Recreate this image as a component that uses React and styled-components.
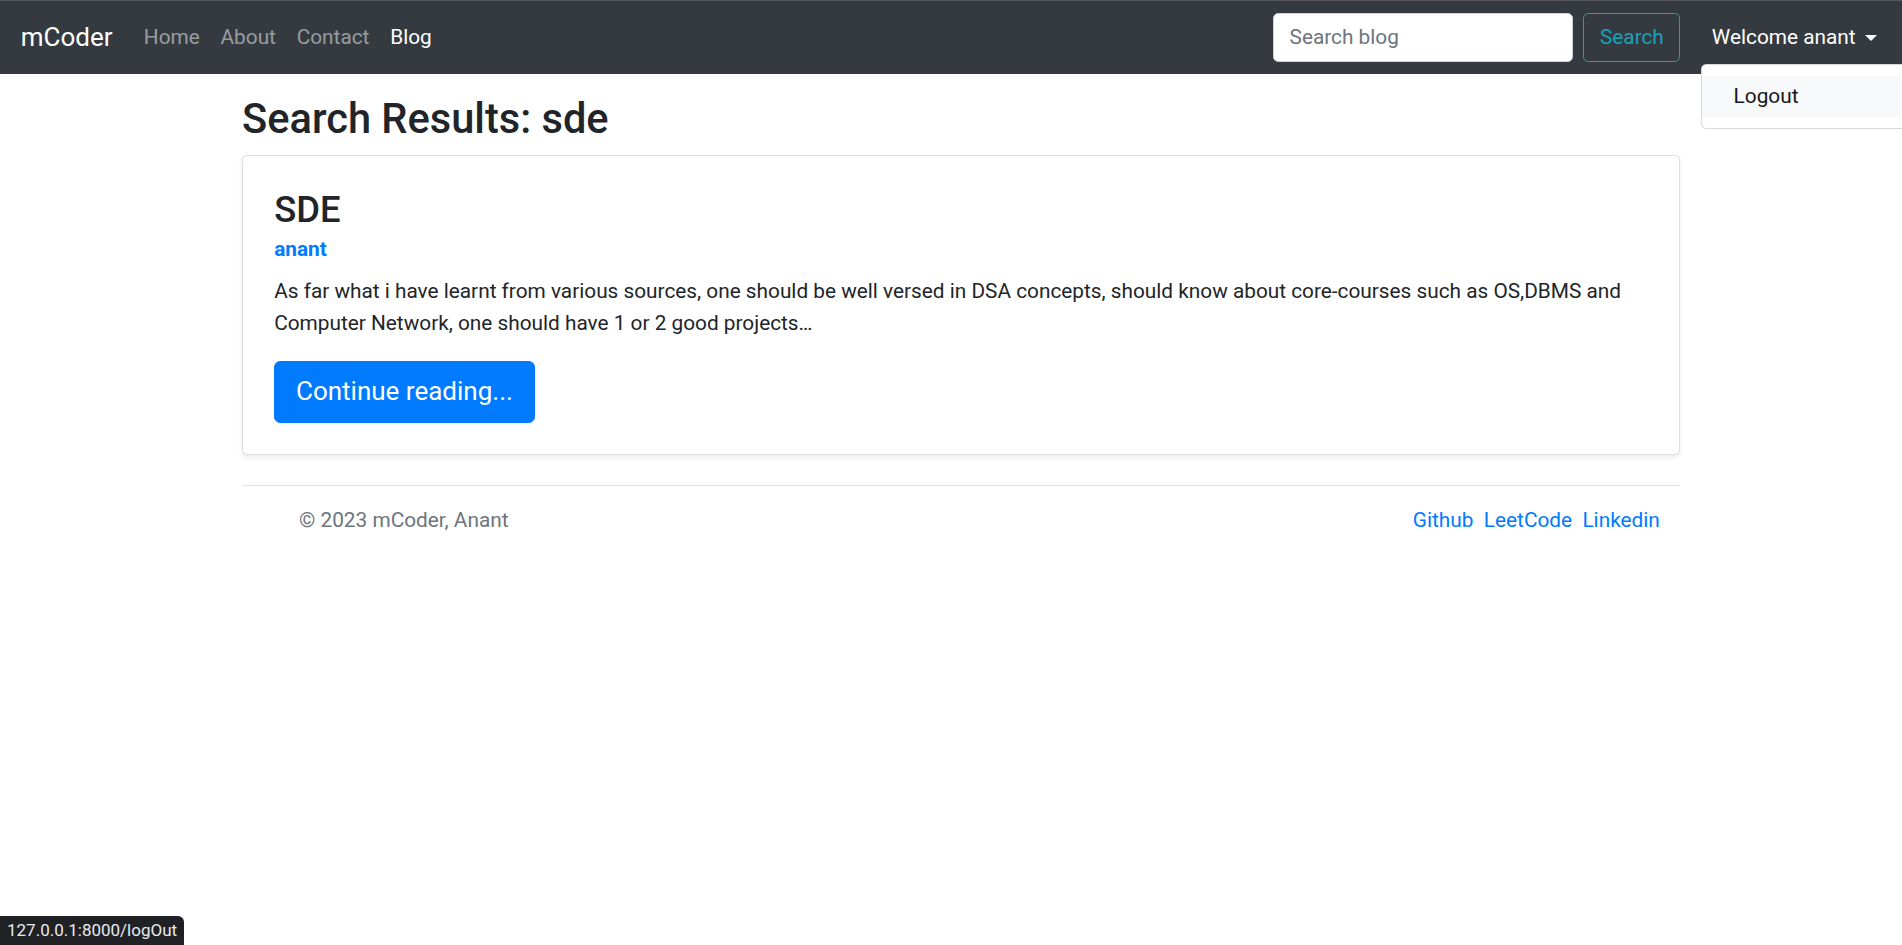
import styled, { createGlobalStyle } from 'styled-components';

const GlobalStyle = createGlobalStyle`
  html {
    font-size: 20.8px;
  }
  body {
    margin: 0;
    overflow-x: hidden;
    font-family: Roboto, "Liberation Sans", Arial, sans-serif;
    font-size: 1rem;
    line-height: 1.5;
    color: #212529;
    background: #fff;
  }
  * {
    box-sizing: border-box;
  }
`;

const Navbar = styled.nav`
  display: flex;
  align-items: center;
  height: 74px;
  padding: 0 15px 0 1rem;
  background: #343a40;
  border-top: 1px solid #55595e;
`;

const Brand = styled.a`
  font-size: 26px;
  line-height: 1.5;
  color: #fff;
  margin-right: 1rem;
  text-decoration: none;
`;

const NavList = styled.div`
  display: flex;
  align-items: center;
  flex: 1;
`;

const NavLink = styled.a`
  padding: 0.5rem;
  color: ${(p) => (p.$active ? '#fff' : 'rgba(255, 255, 255, 0.5)')};
  text-decoration: none;
`;

const SearchForm = styled.form`
  display: flex;
  align-items: center;
  gap: 0.5rem;
`;

const SearchInput = styled.input`
  width: 300px;
  height: 48.8px;
  padding: 0.375rem 0.75rem;
  font-family: inherit;
  font-size: 1rem;
  color: #495057;
  background: #fff;
  border: 1px solid #ced4da;
  border-radius: 5.2px;
  &::placeholder {
    color: #6c757d;
  }
`;

const OutlineButton = styled.button`
  height: 48.8px;
  padding: 0.375rem 0.75rem;
  font-family: inherit;
  font-size: 1rem;
  line-height: 1.5;
  color: #17a2b8;
  background: transparent;
  border: 1px solid #17a2b8;
  border-radius: 5.2px;
`;

const UserMenu = styled.div`
  position: relative;
  margin-left: 21px;
`;

const Toggle = styled.a`
  display: flex;
  align-items: center;
  padding: 0.5rem;
  color: #fff;
  text-decoration: none;
  &::after {
    content: '';
    display: inline-block;
    margin-left: 9px;
    border-top: 0.3em solid;
    border-right: 0.3em solid transparent;
    border-left: 0.3em solid transparent;
  }
`;

const Dropdown = styled.div`
  position: absolute;
  top: 100%;
  left: 0;
  margin-top: 1px;
  min-width: 10rem;
  padding: 0.5rem 0;
  background: #fff;
  border: 1px solid rgba(0, 0, 0, 0.15);
  border-radius: 5.2px;
  z-index: 10;
`;

const DropdownItem = styled.a`
  display: block;
  padding: 0.25rem 1.5rem;
  color: #16181b;
  background: ${(p) => (p.$hover ? '#f8f9fa' : 'transparent')};
  text-decoration: none;
`;

const Main = styled.main`
  width: 1438px;
  margin-left: 242px;
`;

const PageTitle = styled.h2`
  margin: 20px 0 11.5px;
  font-size: 41.6px;
  font-weight: 500;
  line-height: 1.2;
`;

const Card = styled.div`
  padding: 1.5rem;
  background: #fff;
  border: 1px solid rgba(0, 0, 0, 0.125);
  border-radius: 5.2px;
  box-shadow: 0 2.6px 5.2px rgba(0, 0, 0, 0.075);
`;

const PostTitle = styled.h3`
  margin: 0;
  font-size: 36.4px;
  font-weight: 500;
  line-height: 1.2;
`;

const Author = styled.strong`
  display: block;
  margin: 3px 0 11px;
  color: #007bff;
  font-weight: 700;
`;

const Excerpt = styled.p`
  margin: 0 0 22px;
`;

const PrimaryButton = styled.a`
  display: inline-block;
  padding: 0.5rem 1rem;
  font-size: 26px;
  line-height: 1.5;
  color: #fff;
  background: #007bff;
  border: 1px solid #007bff;
  border-radius: 6.2px;
  text-decoration: none;
`;

const Footer = styled.footer`
  display: flex;
  justify-content: space-between;
  align-items: center;
  margin: 30px 0;
  padding: 19px 15px 1rem 57px;
  border-top: 1px solid #dee2e6;
`;

const Copy = styled.p`
  margin: 0;
  color: #6c757d;
`;

const FooterLinks = styled.ul`
  display: flex;
  margin: 0;
  padding: 0;
  list-style: none;
`;

const FooterLink = styled.a`
  padding: 0 5.2px;
  color: #007bff;
  text-decoration: none;
`;

const StatusBubble = styled.div`
  position: fixed;
  left: 0;
  bottom: 0;
  padding: 3px 7px 4px;
  font-size: 17px;
  line-height: 22px;
  color: #e8eaed;
  background: #202124;
  border-top-right-radius: 6px;
`;

export default function App() {
  return (
    <>
      <GlobalStyle />
      <Navbar>
        <Brand href="#">mCoder</Brand>
        <NavList>
          <NavLink href="#">Home</NavLink>
          <NavLink href="#">About</NavLink>
          <NavLink href="#">Contact</NavLink>
          <NavLink href="#" $active>
            Blog
          </NavLink>
        </NavList>
        <SearchForm onSubmit={(e) => e.preventDefault()}>
          <SearchInput type="search" placeholder="Search blog" />
          <OutlineButton type="submit">Search</OutlineButton>
        </SearchForm>
        <UserMenu>
          <Toggle href="#">Welcome anant</Toggle>
          <Dropdown>
            <DropdownItem href="#" $hover>
              Logout
            </DropdownItem>
          </Dropdown>
        </UserMenu>
      </Navbar>

      <Main>
        <PageTitle>Search Results: sde</PageTitle>
        <Card>
          <PostTitle>SDE</PostTitle>
          <Author>anant</Author>
          <Excerpt>
            As far what i have learnt from various sources, one should be well
            versed in DSA concepts, should know about core-courses such as
            OS,DBMS and Computer Network, one should have 1 or 2 good projects…
          </Excerpt>
          <PrimaryButton href="#">Continue reading...</PrimaryButton>
        </Card>
        <Footer>
          <Copy>© 2023 mCoder, Anant</Copy>
          <FooterLinks>
            <li>
              <FooterLink href="#">Github</FooterLink>
            </li>
            <li>
              <FooterLink href="#">LeetCode</FooterLink>
            </li>
            <li>
              <FooterLink href="#">Linkedin</FooterLink>
            </li>
          </FooterLinks>
        </Footer>
      </Main>

      <StatusBubble>127.0.0.1:8000/logOut</StatusBubble>
    </>
  );
}
